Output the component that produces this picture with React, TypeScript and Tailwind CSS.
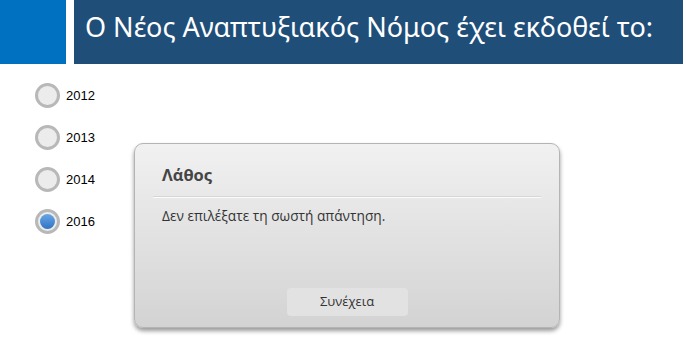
const options = ["2012", "2013", "2014", "2016"];

const Radio = ({ checked }: { checked: boolean }) => (
  <div className="w-[25px] h-[25px] rounded-full border-[3px] border-[#b8b8b8] bg-[#ececec] flex items-center justify-center">
    {checked && (
      <div className="w-[15px] h-[15px] rounded-full bg-gradient-to-b from-[#6aa6e4] to-[#2f74c4]" />
    )}
  </div>
);

export default function App() {
  return (
    <div className="w-[683px] h-[354px] bg-white relative overflow-hidden font-['Open_Sans',sans-serif]">
      <div className="flex h-[64px]">
        <div className="w-[66px] bg-[#0070c0]" />
        <div className="w-[8px]" />
        <div className="flex-1 bg-[#1f4e79] text-white text-[27px] leading-[36px] pl-[11px] pt-[9px] font-['Noto_Sans',sans-serif] whitespace-nowrap">
          Ο Νέος Αναπτυξιακός Νόμος έχει εκδοθεί το:
        </div>
      </div>

      <div className="flex flex-col gap-[17px] pl-[35px] pt-[19px]">
        {options.map((o) => (
          <div key={o} className="flex items-center gap-[6px]">
            <Radio checked={o === "2016"} />
            <span className="text-[13px] text-black font-['Liberation_Sans',sans-serif]">{o}</span>
          </div>
        ))}
      </div>

      <div className="absolute left-[134px] top-[143px] w-[426px] h-[185px] rounded-[9px] border border-[#b4b4b4] bg-gradient-to-b from-[#f1f1f1] to-[#d3d3d3] shadow-[0_3px_4px_rgba(0,0,0,0.4)] flex flex-col px-[18px]">
        <div className="pt-[19px] pl-[9px] pb-[8px] text-[16.5px] font-bold text-[#454545]">Λάθος</div>
        <div className="h-[2px] bg-[#fbfbfb] border-t border-[#d6d6d6]" />
        <div className="pt-[8px] pl-[9px] text-[13.7px] text-[#333]">Δεν επιλέξατε τη σωστή απάντηση.</div>
        <div className="flex-1" />
        <div className="flex justify-center pb-[11px]">
          <div className="w-[121px] h-[28px] rounded-[4px] bg-[#e2e2e2] flex items-center justify-center text-[13px] text-[#333]">
            Συνέχεια
          </div>
        </div>
      </div>
    </div>
  );
}
